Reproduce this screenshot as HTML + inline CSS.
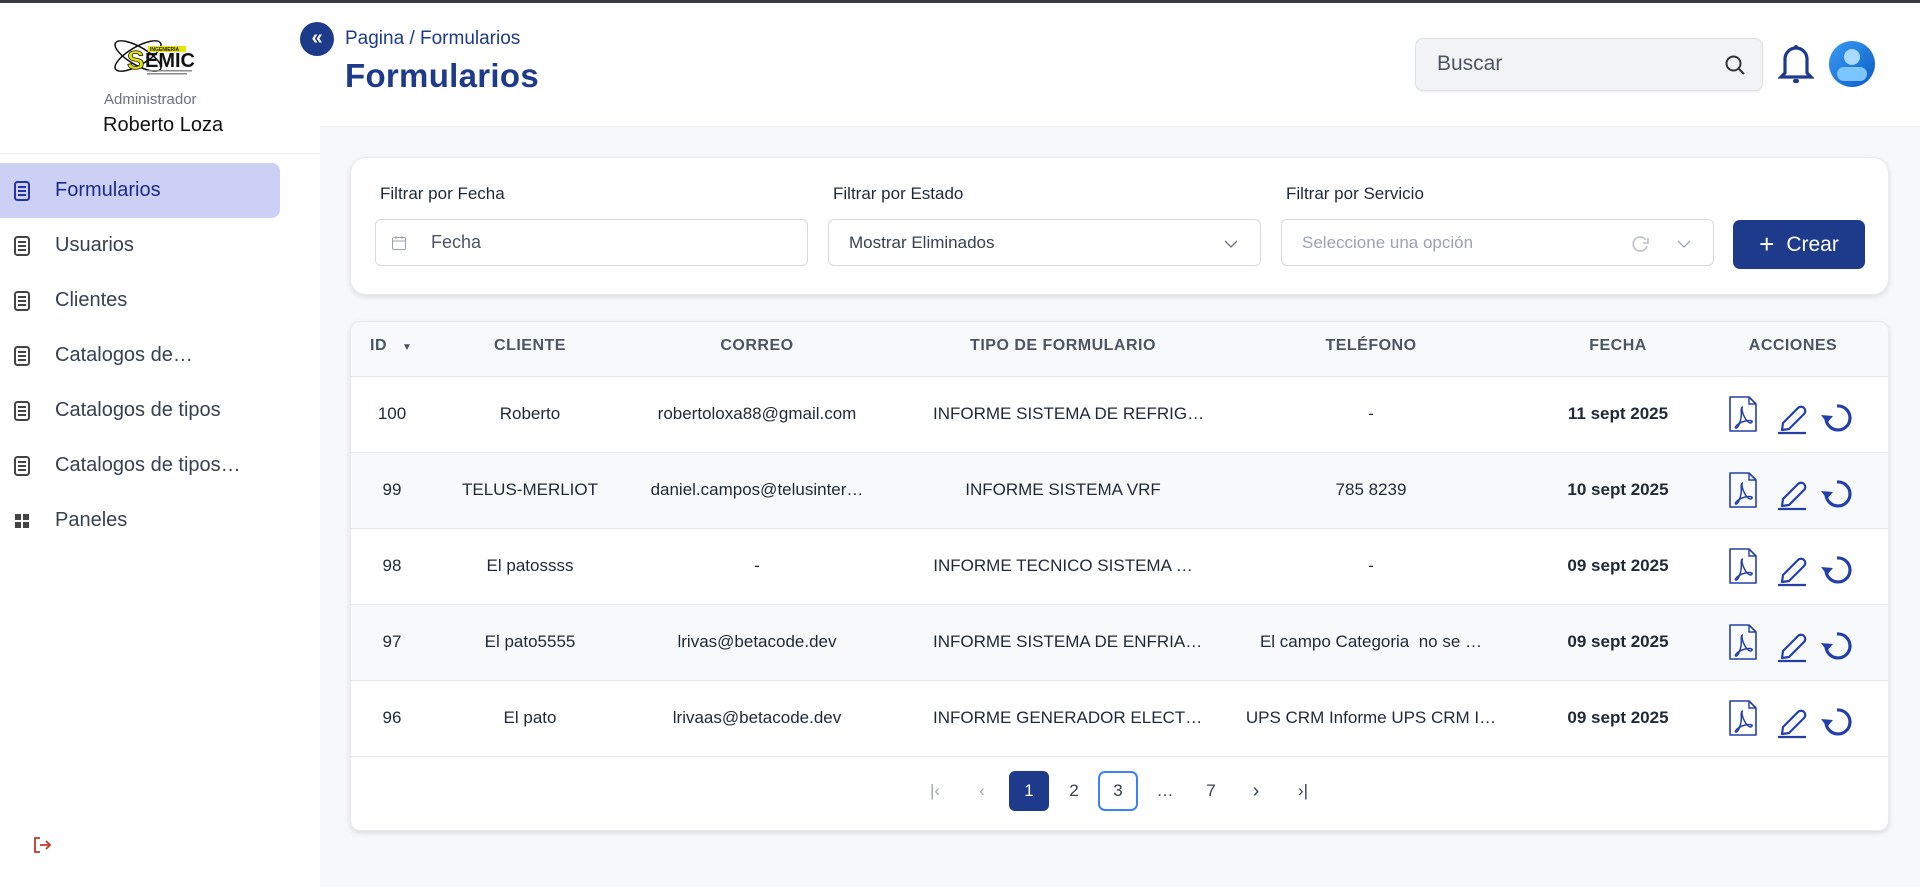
<!DOCTYPE html>
<html><head><meta charset="utf-8"><style>
*{box-sizing:border-box;margin:0;padding:0}
body{width:1920px;height:887px;overflow:hidden;background:#fff;font-family:"Liberation Sans",sans-serif;position:relative;color:#1f2937}
.a{position:absolute}
.topbar{left:0;top:0;width:1920px;height:3px;background:#3a3b40}
.side{left:0;top:3px;width:320px;height:884px;background:#fff}
.main{left:320px;top:126px;width:1600px;height:761px;background:#f7f8fa;border-top:1px solid #eef0f3}
.mi{left:0;width:280px;height:55px;display:flex;align-items:center;font-size:20px;color:#374151}
.mi svg{margin-left:13px;margin-right:24px}
.mi.act{background:#cdd0f5;border-radius:0 8px 8px 0;color:#1e2a8a}
.card{background:#fff;border-radius:16px;box-shadow:0 2px 6px rgba(0,0,0,.12);border:1px solid #e9ebef}
.lbl{font-size:17px;color:#1f2937}
.inp{height:47px;border:1px solid #d6d9de;border-radius:6px;background:#fff;font-size:18px;display:flex;align-items:center}
.th{font-size:16px;font-weight:bold;color:#4b5563;letter-spacing:.5px;text-align:center;top:337px}
.row{left:351px;width:1537px;height:76px;border-top:1px solid #e5e7eb}
.c{position:absolute;top:0;height:76px;line-height:76px;font-size:17px;text-align:center;color:#1f2937;white-space:nowrap}
.pg{width:40px;height:40px;line-height:40px;text-align:center;font-size:17px;color:#374151;top:771px}
</style></head><body>
<div class="a topbar"></div>
<div class="a side"></div>
<svg class="a" style="left:110px;top:33px" width="100" height="46" viewBox="0 0 100 46">
<ellipse cx="28" cy="23" rx="26" ry="9" fill="none" stroke="#111" stroke-width="1.5" transform="rotate(30 28 23)"/>
<ellipse cx="28" cy="23" rx="26" ry="9" fill="none" stroke="#111" stroke-width="1.5" transform="rotate(-30 28 23)"/>
<rect x="38" y="13" width="38" height="6" fill="#e8e400"/>
<text x="40" y="18" font-size="5" font-family="Liberation Sans" font-weight="bold" fill="#111">INGENIERIA</text>
<text x="17" y="36" font-size="26" font-family="Liberation Sans" font-weight="bold" fill="#e8e400" stroke="#111" stroke-width=".8">S</text>
<text x="35" y="34" font-size="20" font-family="Liberation Sans" font-weight="bold" fill="#111">EMIC</text>
<rect x="37" y="37" width="45" height="1.5" fill="#888"/><rect x="37" y="40" width="40" height="1.5" fill="#888"/>
</svg>
<div class="a" style="left:104px;top:91px;font-size:15px;color:#6b7280">Administrador</div>
<div class="a" style="left:103px;top:114px;font-size:20px;color:#111">Roberto Loza</div>
<div class="a" style="left:0;top:153px;width:320px;height:1px;background:#eceef1"></div>

<div class="a mi act" style="top:163px"><svg width="18" height="20" viewBox="0 0 18 20"><rect x="2" y="1" width="14" height="18" rx="2.5" fill="none" stroke="#2433a0" stroke-width="2"/><path d="M5 6h8M5 10h8M5 14h8" stroke="#2433a0" stroke-width="2"/></svg>Formularios</div>
<div class="a mi" style="top:218px"><svg width="18" height="20" viewBox="0 0 18 20"><rect x="2" y="1" width="14" height="18" rx="2.5" fill="none" stroke="#444" stroke-width="2"/><path d="M5 6h8M5 10h8M5 14h8" stroke="#444" stroke-width="2"/></svg>Usuarios</div>
<div class="a mi" style="top:273px"><svg width="18" height="20" viewBox="0 0 18 20"><rect x="2" y="1" width="14" height="18" rx="2.5" fill="none" stroke="#444" stroke-width="2"/><path d="M5 6h8M5 10h8M5 14h8" stroke="#444" stroke-width="2"/></svg>Clientes</div>
<div class="a mi" style="top:328px"><svg width="18" height="20" viewBox="0 0 18 20"><rect x="2" y="1" width="14" height="18" rx="2.5" fill="none" stroke="#444" stroke-width="2"/><path d="M5 6h8M5 10h8M5 14h8" stroke="#444" stroke-width="2"/></svg>Catalogos de…</div>
<div class="a mi" style="top:383px"><svg width="18" height="20" viewBox="0 0 18 20"><rect x="2" y="1" width="14" height="18" rx="2.5" fill="none" stroke="#444" stroke-width="2"/><path d="M5 6h8M5 10h8M5 14h8" stroke="#444" stroke-width="2"/></svg>Catalogos de tipos</div>
<div class="a mi" style="top:438px"><svg width="18" height="20" viewBox="0 0 18 20"><rect x="2" y="1" width="14" height="18" rx="2.5" fill="none" stroke="#444" stroke-width="2"/><path d="M5 6h8M5 10h8M5 14h8" stroke="#444" stroke-width="2"/></svg>Catalogos de tipos…</div>
<div class="a mi" style="top:493px"><svg width="18" height="20" viewBox="0 0 18 20"><rect x="2" y="3" width="6" height="6" fill="#444"/><rect x="10" y="3" width="6" height="6" fill="#444"/><rect x="2" y="11" width="6" height="6" fill="#444"/><rect x="10" y="11" width="6" height="6" fill="#444"/></svg>Paneles</div>
<svg class="a" style="left:32px;top:836px" width="20" height="18" viewBox="0 0 20 18"><path d="M8 2H3v14h5M8 9h10M14 5l4 4-4 4" fill="none" stroke="#c0392b" stroke-width="1.8"/></svg>

<div class="a" style="left:300px;top:22px;width:34px;height:34px;border-radius:50%;background:#1e3a8a;color:#fff;text-align:center;line-height:32px;font-size:20px;font-weight:bold">«</div>
<div class="a" style="left:345px;top:28px;font-size:19px;color:#1e3a8a">Pagina / Formularios</div>
<div class="a" style="left:345px;top:57px;font-size:33px;font-weight:bold;color:#1e3a8a;letter-spacing:.3px">Formularios</div>
<div class="a" style="left:1415px;top:38px;width:348px;height:53px;background:#f2f3f5;border:1px solid #dfe1e5;border-radius:8px;box-shadow:0 1px 2px rgba(0,0,0,.08)"></div>
<div class="a" style="left:1437px;top:52px;font-size:21px;color:#4b5563">Buscar</div>
<svg class="a" style="left:1724px;top:54px" width="22" height="22" viewBox="0 0 22 22"><circle cx="9.5" cy="9.5" r="7" fill="none" stroke="#333" stroke-width="2"/><path d="M15 15l5 5" stroke="#333" stroke-width="2"/></svg>
<svg class="a" style="left:1778px;top:44px" width="36" height="42" viewBox="0 0 36 42"><path d="M18 4a11 11 0 0 0-11 11v14l-4 4h30l-4-4V15A11 11 0 0 0 18 4z" fill="none" stroke="#1e3a8a" stroke-width="3.2"/><circle cx="18" cy="3" r="2" fill="#1e3a8a"/><rect x="15" y="35" width="6" height="4" rx="2" fill="#1e3a8a"/></svg>
<div class="a" style="left:1829px;top:41px;width:46px;height:46px;border-radius:50%;background:linear-gradient(135deg,#3b9cf5,#0b5cc4);overflow:hidden"><div class="a" style="left:15px;top:8px;width:16px;height:16px;border-radius:50%;background:#a8dbff"></div><div class="a" style="left:8px;top:26px;width:30px;height:14px;border-radius:8px;background:#7cc6ff"></div></div>

<div class="a main"></div>
<div class="a card" style="left:350px;top:157px;width:1539px;height:138px"></div>
<div class="a lbl" style="left:380px;top:184px">Filtrar por Fecha</div>
<div class="a lbl" style="left:833px;top:184px">Filtrar por Estado</div>
<div class="a lbl" style="left:1286px;top:184px">Filtrar por Servicio</div>
<div class="a inp" style="left:375px;top:219px;width:433px"><svg style="margin-left:15px" width="16" height="16" viewBox="0 0 16 16"><rect x="1.5" y="2.5" width="13" height="12" rx="1.5" fill="none" stroke="#9ca3af"/><path d="M1.5 6h13M5 1v3M11 1v3" stroke="#9ca3af"/></svg><span style="margin-left:24px;color:#4b5563">Fecha</span></div>
<div class="a inp" style="left:828px;top:219px;width:433px;font-size:17px;color:#374151;padding-left:20px">Mostrar Eliminados<svg class="a" style="right:22px;top:20px" width="14" height="8" viewBox="0 0 14 8"><path d="M1 1l6 6 6-6" fill="none" stroke="#6b7280" stroke-width="1.3"/></svg></div>
<div class="a inp" style="left:1281px;top:219px;width:433px;font-size:17px;color:#9ca3af;padding-left:20px">Seleccione una opción<svg class="a" style="right:62px;top:15px" width="20" height="18" viewBox="0 0 20 18"><path d="M15 5a7 7 0 1 0 1 6" fill="none" stroke="#c4c7cc" stroke-width="1.8"/><path d="M17 3v5h-5" fill="none" stroke="#c4c7cc" stroke-width="1.8"/></svg><svg class="a" style="right:22px;top:20px" width="14" height="8" viewBox="0 0 14 8"><path d="M1 1l6 6 6-6" fill="none" stroke="#9ca3af" stroke-width="1.3"/></svg></div>
<div class="a" style="left:1733px;top:220px;width:132px;height:49px;background:#1e3a8a;border-radius:7px;color:#fff;font-size:21px;line-height:49px;text-align:center"><span style="font-size:26px;vertical-align:-2px;margin-right:12px">+</span>Crear</div>

<div class="a card" style="left:350px;top:321px;width:1539px;height:510px;border-radius:10px;background:#f8f9fb;overflow:hidden"></div>
<div class="a th" style="left:370px">ID <span style="font-size:10px;margin-left:10px">▼</span></div>
<div class="a th" style="left:470px;width:120px">CLIENTE</div>
<div class="a th" style="left:657px;width:200px">CORREO</div>
<div class="a th" style="left:933px;width:260px">TIPO DE FORMULARIO</div>
<div class="a th" style="left:1271px;width:200px">TELÉFONO</div>
<div class="a th" style="left:1548px;width:140px">FECHA</div>
<div class="a th" style="left:1723px;width:140px">ACCIONES</div>

<div class="a row" style="top:376px;background:#fff"></div>
<div class="a row" style="top:452px;background:#f8f9fb"></div>
<div class="a row" style="top:528px;background:#fff"></div>
<div class="a row" style="top:604px;background:#f8f9fb"></div>
<div class="a row" style="top:680px;background:#fff"></div>
<div class="a row" style="top:756px;background:#fff;height:74px;border-radius:0 0 10px 10px"></div>

<div class="a" style="left:0;top:376px;width:1920px;height:380px">
<div class="a" style="top:0;left:0;width:1920px;height:76px"><div class="c" style="left:352px;width:80px">100</div><div class="c" style="left:470px;width:120px">Roberto</div><div class="c" style="left:617px;width:280px">robertoloxa88@gmail.com</div><div class="c" style="left:933px;width:260px">INFORME SISTEMA DE REFRIG…</div><div class="c" style="left:1271px;width:200px">-</div><div class="c" style="left:1548px;width:140px;font-weight:bold">11 sept 2025</div></div>
<div class="a" style="top:76px;left:0;width:1920px;height:76px"><div class="c" style="left:352px;width:80px">99</div><div class="c" style="left:450px;width:160px">TELUS-MERLIOT</div><div class="c" style="left:617px;width:280px">daniel.campos@telusinter…</div><div class="c" style="left:933px;width:260px">INFORME SISTEMA VRF</div><div class="c" style="left:1271px;width:200px">785 8239</div><div class="c" style="left:1548px;width:140px;font-weight:bold">10 sept 2025</div></div>
<div class="a" style="top:152px;left:0;width:1920px;height:76px"><div class="c" style="left:352px;width:80px">98</div><div class="c" style="left:470px;width:120px">El patossss</div><div class="c" style="left:617px;width:280px">-</div><div class="c" style="left:933px;width:260px">INFORME TECNICO SISTEMA …</div><div class="c" style="left:1271px;width:200px">-</div><div class="c" style="left:1548px;width:140px;font-weight:bold">09 sept 2025</div></div>
<div class="a" style="top:228px;left:0;width:1920px;height:76px"><div class="c" style="left:352px;width:80px">97</div><div class="c" style="left:470px;width:120px">El pato5555</div><div class="c" style="left:617px;width:280px">lrivas@betacode.dev</div><div class="c" style="left:933px;width:260px">INFORME SISTEMA DE ENFRIA…</div><div class="c" style="left:1241px;width:260px">El campo Categoria&nbsp; no se …</div><div class="c" style="left:1548px;width:140px;font-weight:bold">09 sept 2025</div></div>
<div class="a" style="top:304px;left:0;width:1920px;height:76px"><div class="c" style="left:352px;width:80px">96</div><div class="c" style="left:470px;width:120px">El pato</div><div class="c" style="left:617px;width:280px">lrivaas@betacode.dev</div><div class="c" style="left:933px;width:260px">INFORME GENERADOR ELECT…</div><div class="c" style="left:1241px;width:260px">UPS CRM Informe UPS CRM I…</div><div class="c" style="left:1548px;width:140px;font-weight:bold">09 sept 2025</div></div>
</div>

<svg width="0" height="0" style="position:absolute"><defs>
<g id="ic">
<path d="M2 1h19l7 7v27H2z" fill="none" stroke="#2340a8" stroke-width="1.6" stroke-linejoin="round"/><path d="M21 1v7h7" fill="none" stroke="#2340a8" stroke-width="1.4"/>
<path d="M15 11c-2 0-1 6 2 11s6 6 7 4-5-2-10 0-8 6-6 6 4-5 5-10-1-11 2-11z" fill="none" stroke="#2340a8" stroke-width="1.5"/>
<path d="M55 27l15-15a4 4 0 0 1 6 6l-15 15-7 1z" fill="none" stroke="#2340a8" stroke-width="2.2" stroke-linejoin="round"/><path d="M50 37h28" stroke="#2340a8" stroke-width="2.2"/>
<path d="M109 10a12 12 0 1 1-11 12" fill="none" stroke="#2340a8" stroke-width="3.2"/><path d="M93 19l6 8 6-7z" fill="#2340a8"/>
</g></defs></svg>
<svg class="a" style="left:1728px;top:396px" width="135" height="40"><use href="#ic"/></svg>
<svg class="a" style="left:1728px;top:472px" width="135" height="40"><use href="#ic"/></svg>
<svg class="a" style="left:1728px;top:548px" width="135" height="40"><use href="#ic"/></svg>
<svg class="a" style="left:1728px;top:624px" width="135" height="40"><use href="#ic"/></svg>
<svg class="a" style="left:1728px;top:700px" width="135" height="40"><use href="#ic"/></svg>

<div class="a pg" style="left:915px;color:#9ca3af">|‹</div>
<div class="a pg" style="left:962px;color:#9ca3af">‹</div>
<div class="a pg" style="left:1009px;background:#1e3a8a;color:#fff;border-radius:6px">1</div>
<div class="a pg" style="left:1054px">2</div>
<div class="a pg" style="left:1098px;border:2px solid #3b82f6;border-radius:7px;line-height:36px">3</div>
<div class="a pg" style="left:1145px">…</div>
<div class="a pg" style="left:1191px">7</div>
<div class="a pg" style="left:1236px;font-size:20px">›</div>
<div class="a pg" style="left:1283px">›|</div>
</body></html>
